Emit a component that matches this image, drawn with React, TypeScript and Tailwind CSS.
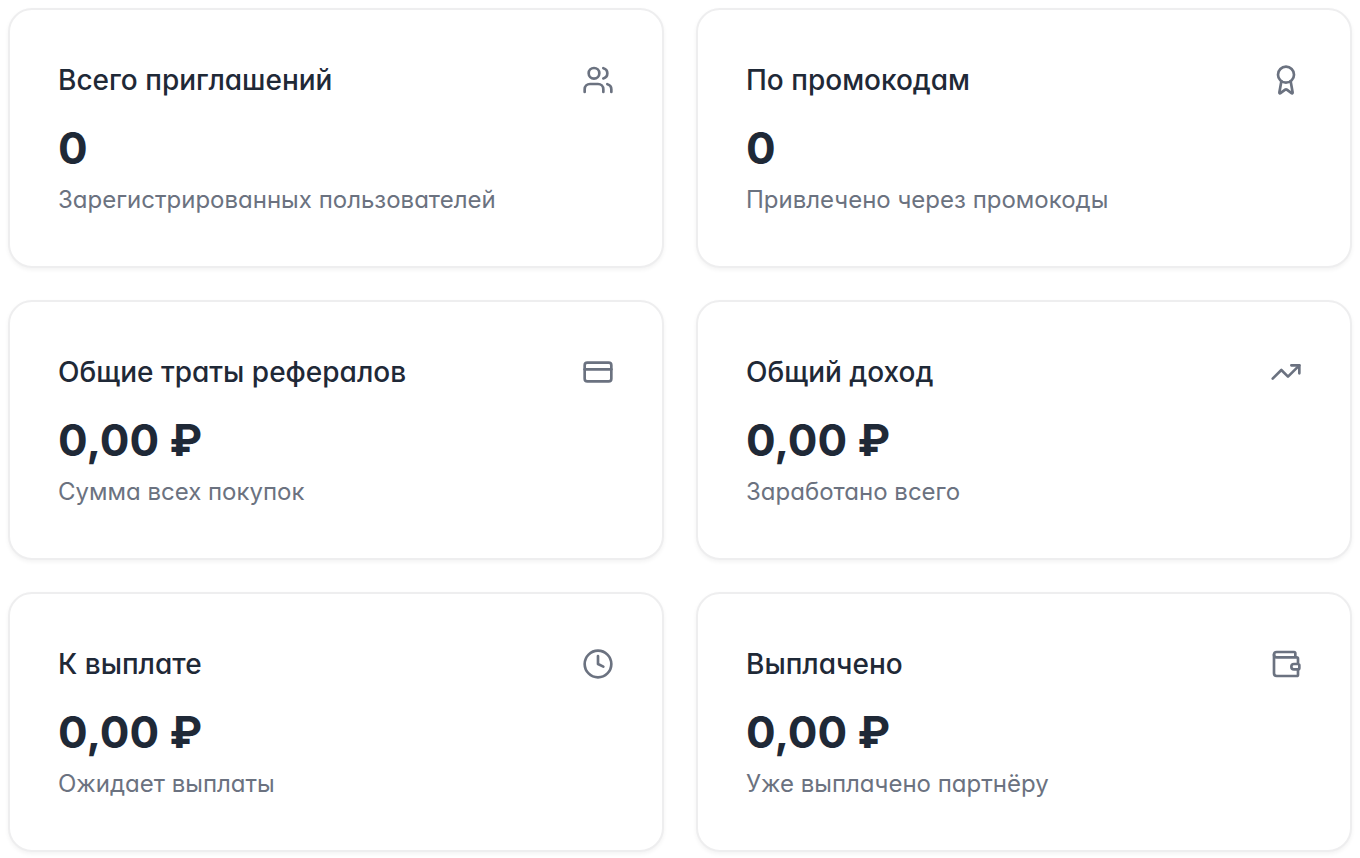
import React from 'react'
import { Award, Clock, CreditCard, TrendingUp, Users, Wallet } from 'lucide-react'
import type { LucideIcon } from 'lucide-react'

interface StatCardProps {
  title: string
  value: string
  desc: string
  icon: LucideIcon
}

const stats: StatCardProps[] = [
  { title: 'Всего приглашений', value: '0', desc: 'Зарегистрированных пользователей', icon: Users },
  { title: 'По промокодам', value: '0', desc: 'Привлечено через промокоды', icon: Award },
  { title: 'Общие траты рефералов', value: '0,00 ₽', desc: 'Сумма всех покупок', icon: CreditCard },
  { title: 'Общий доход', value: '0,00 ₽', desc: 'Заработано всего', icon: TrendingUp },
  { title: 'К выплате', value: '0,00 ₽', desc: 'Ожидает выплаты', icon: Clock },
  { title: 'Выплачено', value: '0,00 ₽', desc: 'Уже выплачено партнёру', icon: Wallet },
]

function StatCard({ title, value, desc, icon: Icon }: StatCardProps) {
  return (
    <section className="rounded-3xl border-2 border-[#eeeeef] bg-white px-12 py-[50px] shadow-[0_2px_4px_rgba(0,0,0,0.05)]">
      <div className="flex items-center justify-between pb-4">
        <h3 className="text-[28px] leading-10 font-medium text-[#1f2937]">{title}</h3>
        <Icon size={32} className="shrink-0 text-[#6b7280]" aria-hidden="true" />
      </div>
      <p className="text-[44px] leading-16 font-bold text-[#1f2937]">{value}</p>
      <p className="mt-1 text-2xl leading-8 text-[#6b7280]">{desc}</p>
    </section>
  )
}

export default function App() {
  return (
    <main className="grid min-h-screen grid-cols-2 content-start gap-8 bg-white p-2 font-[Inter,sans-serif] [font-feature-settings:'cv11']">
      {stats.map((stat) => (
        <StatCard key={stat.title} {...stat} />
      ))}
    </main>
  )
}
